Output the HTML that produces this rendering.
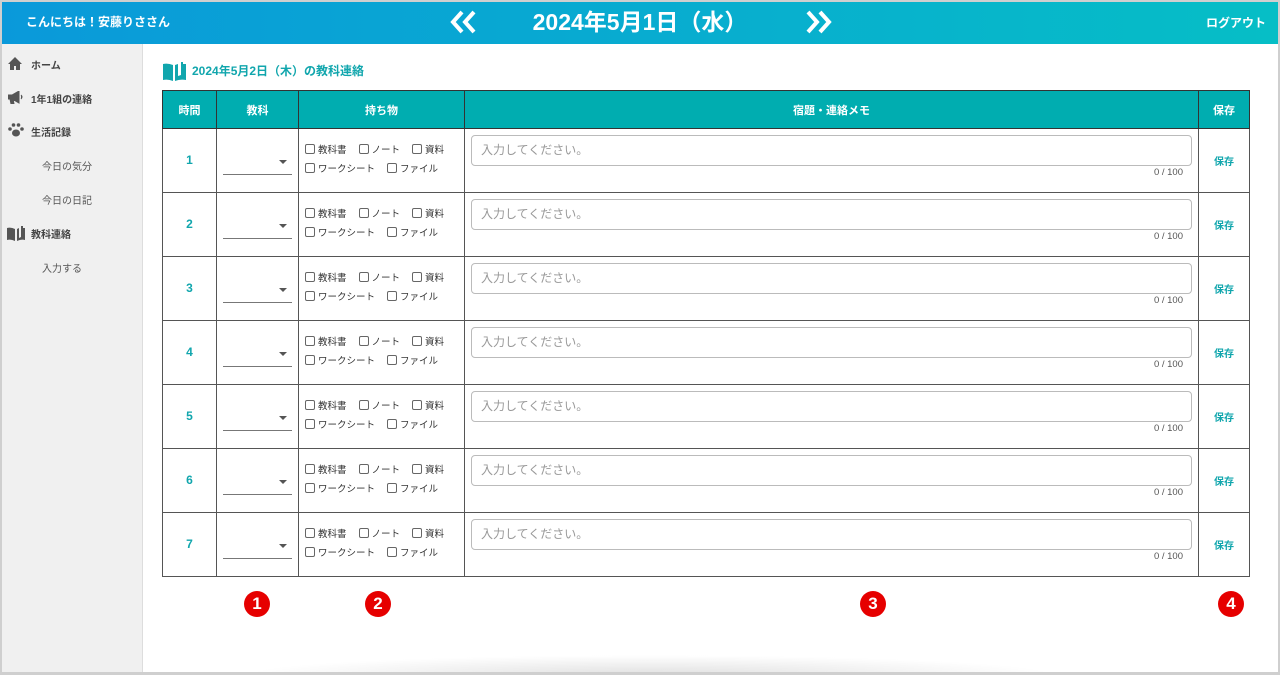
<!DOCTYPE html>
<html><head><meta charset="utf-8">
<style>
*{box-sizing:border-box;margin:0;padding:0}
body{width:1280px;height:675px;overflow:hidden;background:#fff;font-family:"Liberation Sans","Noto Sans CJK JP",sans-serif;position:relative}
.frame{position:absolute;left:0;top:0;width:1280px;height:675px;border:2px solid #cfcfcf;border-bottom-width:3px;pointer-events:none;z-index:5}
.hdr{position:absolute;left:0;top:0;width:1280px;height:44px;background:linear-gradient(90deg,#0a99da,#06bec6);color:#fff;font-weight:bold}
.hdr .hi{position:absolute;left:26px;top:13px;font-size:12px}
.hdr .date{position:absolute;left:0;width:1280px;top:3px;text-align:center;font-size:23px}
.hdr .lo{position:absolute;right:14px;top:14px;font-size:12px}
.side{position:absolute;left:2px;top:44px;width:141px;height:629px;background:#f0f0f0;border-right:1px solid #ddd}
.side div{position:absolute;font-size:10px;font-weight:bold;color:#444}
.side .sub{font-weight:normal;color:#555;left:40px}
.ttl{position:absolute;left:163px;top:62px;font-size:12px;font-weight:bold;color:#11a6ad}
table{position:absolute;left:162px;top:90px;border-collapse:collapse}
td,th{border:1.5px solid #555;padding:0;position:relative}
th{background:#00adb0;color:#fff;font-size:11px;height:38px;border-color:#333}
td{height:64px}
.num,.sv{text-align:center;color:#11a6ad;font-weight:bold;font-size:12px;vertical-align:top;padding-top:24px}
.sv{font-size:10px;padding-top:24px}
.sel{position:absolute;left:6px;right:6px;top:45px;border-bottom:1px solid #777}
.arr{position:absolute;right:11px;top:31px;width:0;height:0;border-left:4px solid transparent;border-right:4px solid transparent;border-top:4px solid #555}
.cb{position:absolute;left:6px;font-size:9.5px;color:#333;white-space:nowrap}
.cb span{display:inline-block;width:10px;height:10px;border:1px solid #666;border-radius:2px;vertical-align:-1px;margin-right:3px}
.cb i{font-style:normal;margin-right:12px}
.inp{position:absolute;left:6px;right:6px;top:6px;height:31px;border:1.5px solid #bbb;border-radius:4px;color:#999;font-size:12px;padding:5px 0 0 9px}
.cnt{position:absolute;right:15px;top:38px;font-size:9.5px;color:#555}
.c{position:absolute;width:26px;height:26px;border-radius:50%;background:#e60000;color:#fff;font-weight:bold;font-size:17px;text-align:center;line-height:26px;top:591px}
.shadow{position:absolute;left:240px;top:655px;width:820px;height:20px;background:radial-gradient(ellipse at center bottom,rgba(0,0,0,.12),rgba(0,0,0,0) 70%)}
</style></head><body>
<div class="hdr">
<div class="hi">こんにちは！安藤りささん</div>
<svg style="position:absolute;left:450px;top:10px" width="28" height="24" viewBox="0 0 28 24"><path d="M12 2 3 12l9 10M24 2l-9 10 9 10" stroke="#fff" stroke-width="4" fill="none"/></svg>
<div class="date">2024年5月1日（水）</div>
<svg style="position:absolute;left:804px;top:10px" width="28" height="24" viewBox="0 0 28 24"><path d="M4 2l9 10-9 10M16 2l9 10-9 10" stroke="#fff" stroke-width="4" fill="none"/></svg>
<div class="lo">ログアウト</div>
</div>
<div class="side">
<svg style="position:absolute;left:6px;top:13px" width="14" height="13" viewBox="0 0 14 13"><path d="M7 0 0 7h2v6h4V9h2v4h4V7h2z" fill="#555"/></svg>
<div style="left:29px;top:13px">ホーム</div>
<svg style="position:absolute;left:6px;top:47px" width="16" height="13" viewBox="0 0 16 13"><path d="M0 4h4l7-4v12L4 8H0zM2 8h3l1 5H3zM13 4q2 2 0 4" fill="#555" stroke="#555"/></svg>
<div style="left:29px;top:47px">1年1組の連絡</div>
<svg style="position:absolute;left:6px;top:79px" width="16" height="14" viewBox="0 0 16 14"><ellipse cx="8" cy="10" rx="4" ry="3.5" fill="#555"/><circle cx="2" cy="6" r="1.8" fill="#555"/><circle cx="14" cy="6" r="1.8" fill="#555"/><circle cx="5.5" cy="2" r="1.8" fill="#555"/><circle cx="10.5" cy="2" r="1.8" fill="#555"/></svg>
<div style="left:29px;top:80px">生活記録</div>
<div class="sub" style="top:114px">今日の気分</div>
<div class="sub" style="top:148px">今日の日記</div>
<svg style="position:absolute;left:5px;top:182px" width="18" height="15" viewBox="0 0 18 15"><path d="M0 2q4-1 8 1v12Q4 13 0 14zM10 3l2-1v10l2-1V0h2v2h2v12q-4-1-8 1z" fill="#555"/></svg>
<div style="left:29px;top:182px">教科連絡</div>
<div class="sub" style="top:216px">入力する</div>
</div>
<svg style="position:absolute;left:163px;top:62px" width="23" height="19" viewBox="0 0 23 19"><path d="M0 2q5-1 10 1v16Q5 17 0 18zM12 3l3-1v12l3-1V0h2v2h3v16q-6-1-11 1z" fill="#11a6ad"/></svg>
<div class="ttl" style="left:192px">2024年5月2日（木）の教科連絡</div>
<table>
<tr><th style="width:54px">時間</th><th style="width:82px">教科</th><th style="width:166px">持ち物</th><th style="width:734px">宿題・連絡メモ</th><th style="width:51px">保存</th></tr>
<tr><td class="num">1</td><td><div class="arr"></div><div class="sel"></div></td><td><div class="cb" style="top:13px"><span></span><i>教科書</i><span></span><i>ノート</i><span></span>資料</div><div class="cb" style="top:32px"><span></span><i>ワークシート</i><span></span>ファイル</div></td><td><div class="inp">入力してください。</div><div class="cnt">0 / 100</div></td><td class="sv">保存</td></tr>
<tr><td class="num">2</td><td><div class="arr"></div><div class="sel"></div></td><td><div class="cb" style="top:13px"><span></span><i>教科書</i><span></span><i>ノート</i><span></span>資料</div><div class="cb" style="top:32px"><span></span><i>ワークシート</i><span></span>ファイル</div></td><td><div class="inp">入力してください。</div><div class="cnt">0 / 100</div></td><td class="sv">保存</td></tr>
<tr><td class="num">3</td><td><div class="arr"></div><div class="sel"></div></td><td><div class="cb" style="top:13px"><span></span><i>教科書</i><span></span><i>ノート</i><span></span>資料</div><div class="cb" style="top:32px"><span></span><i>ワークシート</i><span></span>ファイル</div></td><td><div class="inp">入力してください。</div><div class="cnt">0 / 100</div></td><td class="sv">保存</td></tr>
<tr><td class="num">4</td><td><div class="arr"></div><div class="sel"></div></td><td><div class="cb" style="top:13px"><span></span><i>教科書</i><span></span><i>ノート</i><span></span>資料</div><div class="cb" style="top:32px"><span></span><i>ワークシート</i><span></span>ファイル</div></td><td><div class="inp">入力してください。</div><div class="cnt">0 / 100</div></td><td class="sv">保存</td></tr>
<tr><td class="num">5</td><td><div class="arr"></div><div class="sel"></div></td><td><div class="cb" style="top:13px"><span></span><i>教科書</i><span></span><i>ノート</i><span></span>資料</div><div class="cb" style="top:32px"><span></span><i>ワークシート</i><span></span>ファイル</div></td><td><div class="inp">入力してください。</div><div class="cnt">0 / 100</div></td><td class="sv">保存</td></tr>
<tr><td class="num">6</td><td><div class="arr"></div><div class="sel"></div></td><td><div class="cb" style="top:13px"><span></span><i>教科書</i><span></span><i>ノート</i><span></span>資料</div><div class="cb" style="top:32px"><span></span><i>ワークシート</i><span></span>ファイル</div></td><td><div class="inp">入力してください。</div><div class="cnt">0 / 100</div></td><td class="sv">保存</td></tr>
<tr><td class="num">7</td><td><div class="arr"></div><div class="sel"></div></td><td><div class="cb" style="top:13px"><span></span><i>教科書</i><span></span><i>ノート</i><span></span>資料</div><div class="cb" style="top:32px"><span></span><i>ワークシート</i><span></span>ファイル</div></td><td><div class="inp">入力してください。</div><div class="cnt">0 / 100</div></td><td class="sv">保存</td></tr>
</table>
<div class="c" style="left:244px">1</div>
<div class="c" style="left:365px">2</div>
<div class="c" style="left:860px">3</div>
<div class="c" style="left:1218px">4</div>
<div class="shadow"></div>
<div class="frame"></div>
</body></html>
